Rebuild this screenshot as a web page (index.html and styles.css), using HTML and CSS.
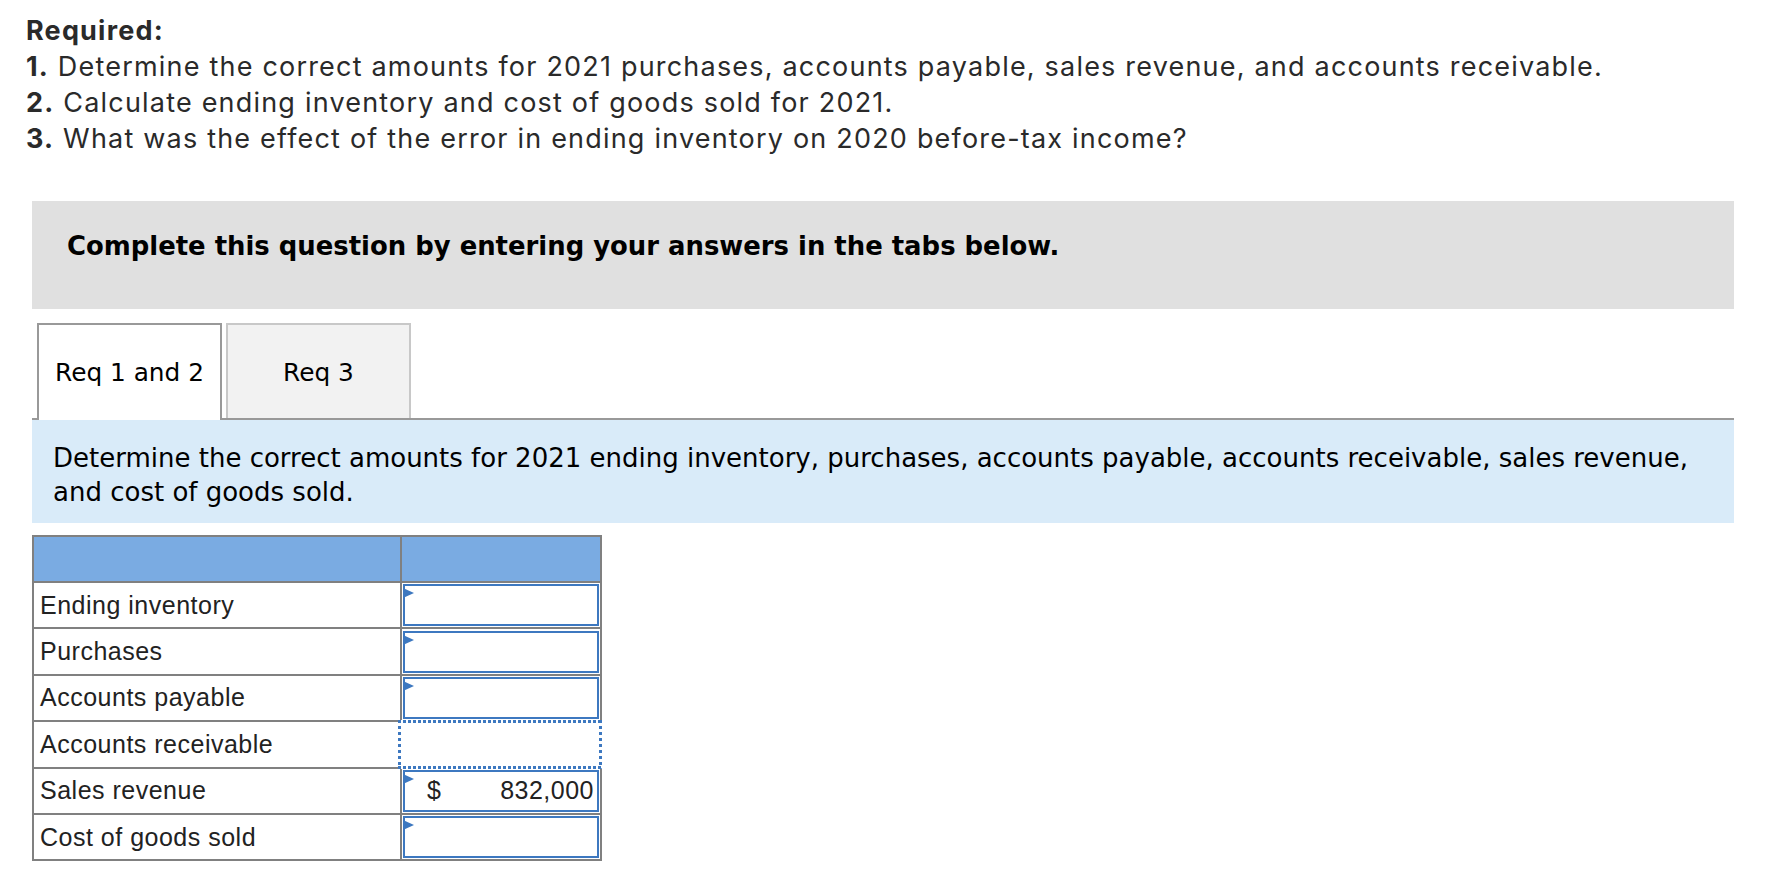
FILE: index.html
```html
<!DOCTYPE html>
<html lang="en">
<head>
  <meta charset="UTF-8" />
  <title>Required</title>
  <link rel="stylesheet" href="styles.css">
</head>
<body>

  <div class="page">
    <div class="required">
      <p><strong>Required:</strong></p>
      <p><strong>1.</strong> Determine the correct amounts for 2021 purchases, accounts payable, sales revenue, and accounts receivable.</p>
      <p><strong>2.</strong> Calculate ending inventory and cost of goods sold for 2021.</p>
      <p><strong>3.</strong> What was the effect of the error in ending inventory on 2020 before-tax income?</p>
    </div>

    <div class="prompt">Complete this question by entering your answers in the tabs below.</div>

    <div class="tabs">
      <div class="tab active">Req 1 and 2</div>
      <div class="tab">Req 3</div>
    </div>

    <div class="instructions">
      Determine the correct amounts for 2021 ending inventory, purchases, accounts payable, accounts receivable, sales revenue, and cost of goods sold.
    </div>

    <table class="answers">
      <colgroup>
        <col class="label-col">
        <col class="value-col">
      </colgroup>
      <thead>
        <tr><th></th><th></th></tr>
      </thead>
      <tbody>
        <tr>
          <td class="label">Ending inventory</td>
          <td class="value"><div class="answer"></div></td>
        </tr>
        <tr>
          <td class="label">Purchases</td>
          <td class="value"><div class="answer"></div></td>
        </tr>
        <tr>
          <td class="label">Accounts payable</td>
          <td class="value"><div class="answer"></div></td>
        </tr>
        <tr>
          <td class="label">Accounts receivable</td>
          <td class="value focused"><div class="focus-ring"></div></td>
        </tr>
        <tr>
          <td class="label">Sales revenue</td>
          <td class="value"><div class="answer"><span>$</span><span>832,000</span></div></td>
        </tr>
        <tr>
          <td class="label">Cost of goods sold</td>
          <td class="value"><div class="answer"></div></td>
        </tr>
      </tbody>
    </table>
  </div>

</body>
</html>
```

FILE: styles.css
```css
body {
  margin: 0;
  padding: 0;
  background: #fff;
  color: #000;
}

.page {
  padding: 0 48px 0 32px;
}

.required {
  margin-left: -6px;
  padding-top: 13px;
  font-family: Inter, "Open Sans", sans-serif;
  font-size: 27px;
  line-height: 36px;
  letter-spacing: 1.2px;
  color: #2a2a2a;
}

.required p {
  margin: 0;
}

.required strong {
  font-weight: 700;
}

.prompt {
  margin-top: 44px;
  padding: 30px 0 48px 35px;
  background: #e0e0e0;
  font-family: "DejaVu Sans", Verdana, sans-serif;
  font-weight: bold;
  font-size: 25.9px;
  line-height: 30px;
}

.tabs {
  display: flex;
  align-items: flex-end;
  gap: 4px;
  margin-top: 14px;
  padding-left: 5px;
  border-bottom: 2px solid #999;
  font-family: "DejaVu Sans", Verdana, sans-serif;
  font-size: 24.8px;
  line-height: 28px;
}

.tab {
  width: 185px;
  box-sizing: border-box;
  padding: 34px 0 31px;
  border: 2px solid #c8c8c8;
  border-bottom: none;
  background: #f2f2f2;
  text-align: center;
}

.tab.active {
  position: relative;
  margin-bottom: -2px;
  padding-bottom: 33px;
  border-color: #999;
  background: #fff;
}

.instructions {
  padding: 21px 16px 14px 21px;
  background: #d9ebf9;
  font-family: "DejaVu Sans", Verdana, sans-serif;
  font-size: 26px;
  line-height: 34px;
}

.answers {
  margin-top: 12px;
  border-collapse: collapse;
  font-family: "Liberation Sans", Arial, sans-serif;
  font-size: 25px;
  letter-spacing: 0.5px;
  color: #222;
}

.label-col {
  width: 368px;
}

.value-col {
  width: 200px;
}

.answers th,
.answers td {
  border: 2px solid #808080;
  padding: 0;
}

.answers th {
  height: 44px;
  background: #7aabe2;
}

.answers td {
  height: 42.4px;
}

.answers td.label {
  padding-left: 6px;
  vertical-align: middle;
}

.answers td.value {
  padding: 1px;
}

.answers td.focused {
  position: relative;
}

/* dotted focus frame drawn over the cell borders */
.focus-ring {
  position: absolute;
  top: -2px;
  right: -2px;
  bottom: -2px;
  left: -4px;
  background:
    repeating-linear-gradient(90deg, #3d78c0 0 3px, transparent 3px 5px) top / 100% 3px no-repeat,
    repeating-linear-gradient(90deg, #3d78c0 0 3px, transparent 3px 5px) bottom / 100% 3px no-repeat,
    repeating-linear-gradient(180deg, #3d78c0 0 3px, transparent 3px 6px) left / 3px 100% no-repeat,
    repeating-linear-gradient(180deg, #3d78c0 0 3px, transparent 3px 6px) right / 3px 100% no-repeat,
    #fff;
}

.answer {
  position: relative;
  height: 42px;
  box-sizing: border-box;
  border: 2px solid #3d78c0;
  display: flex;
  align-items: center;
  justify-content: space-between;
  padding: 0 3px 0 22px;
}

.answer::before {
  content: "";
  position: absolute;
  left: -2px;
  top: 2px;
  border-left: 11px solid #3d78c0;
  border-top: 5.5px solid transparent;
  border-bottom: 5.5px solid transparent;
}
```
